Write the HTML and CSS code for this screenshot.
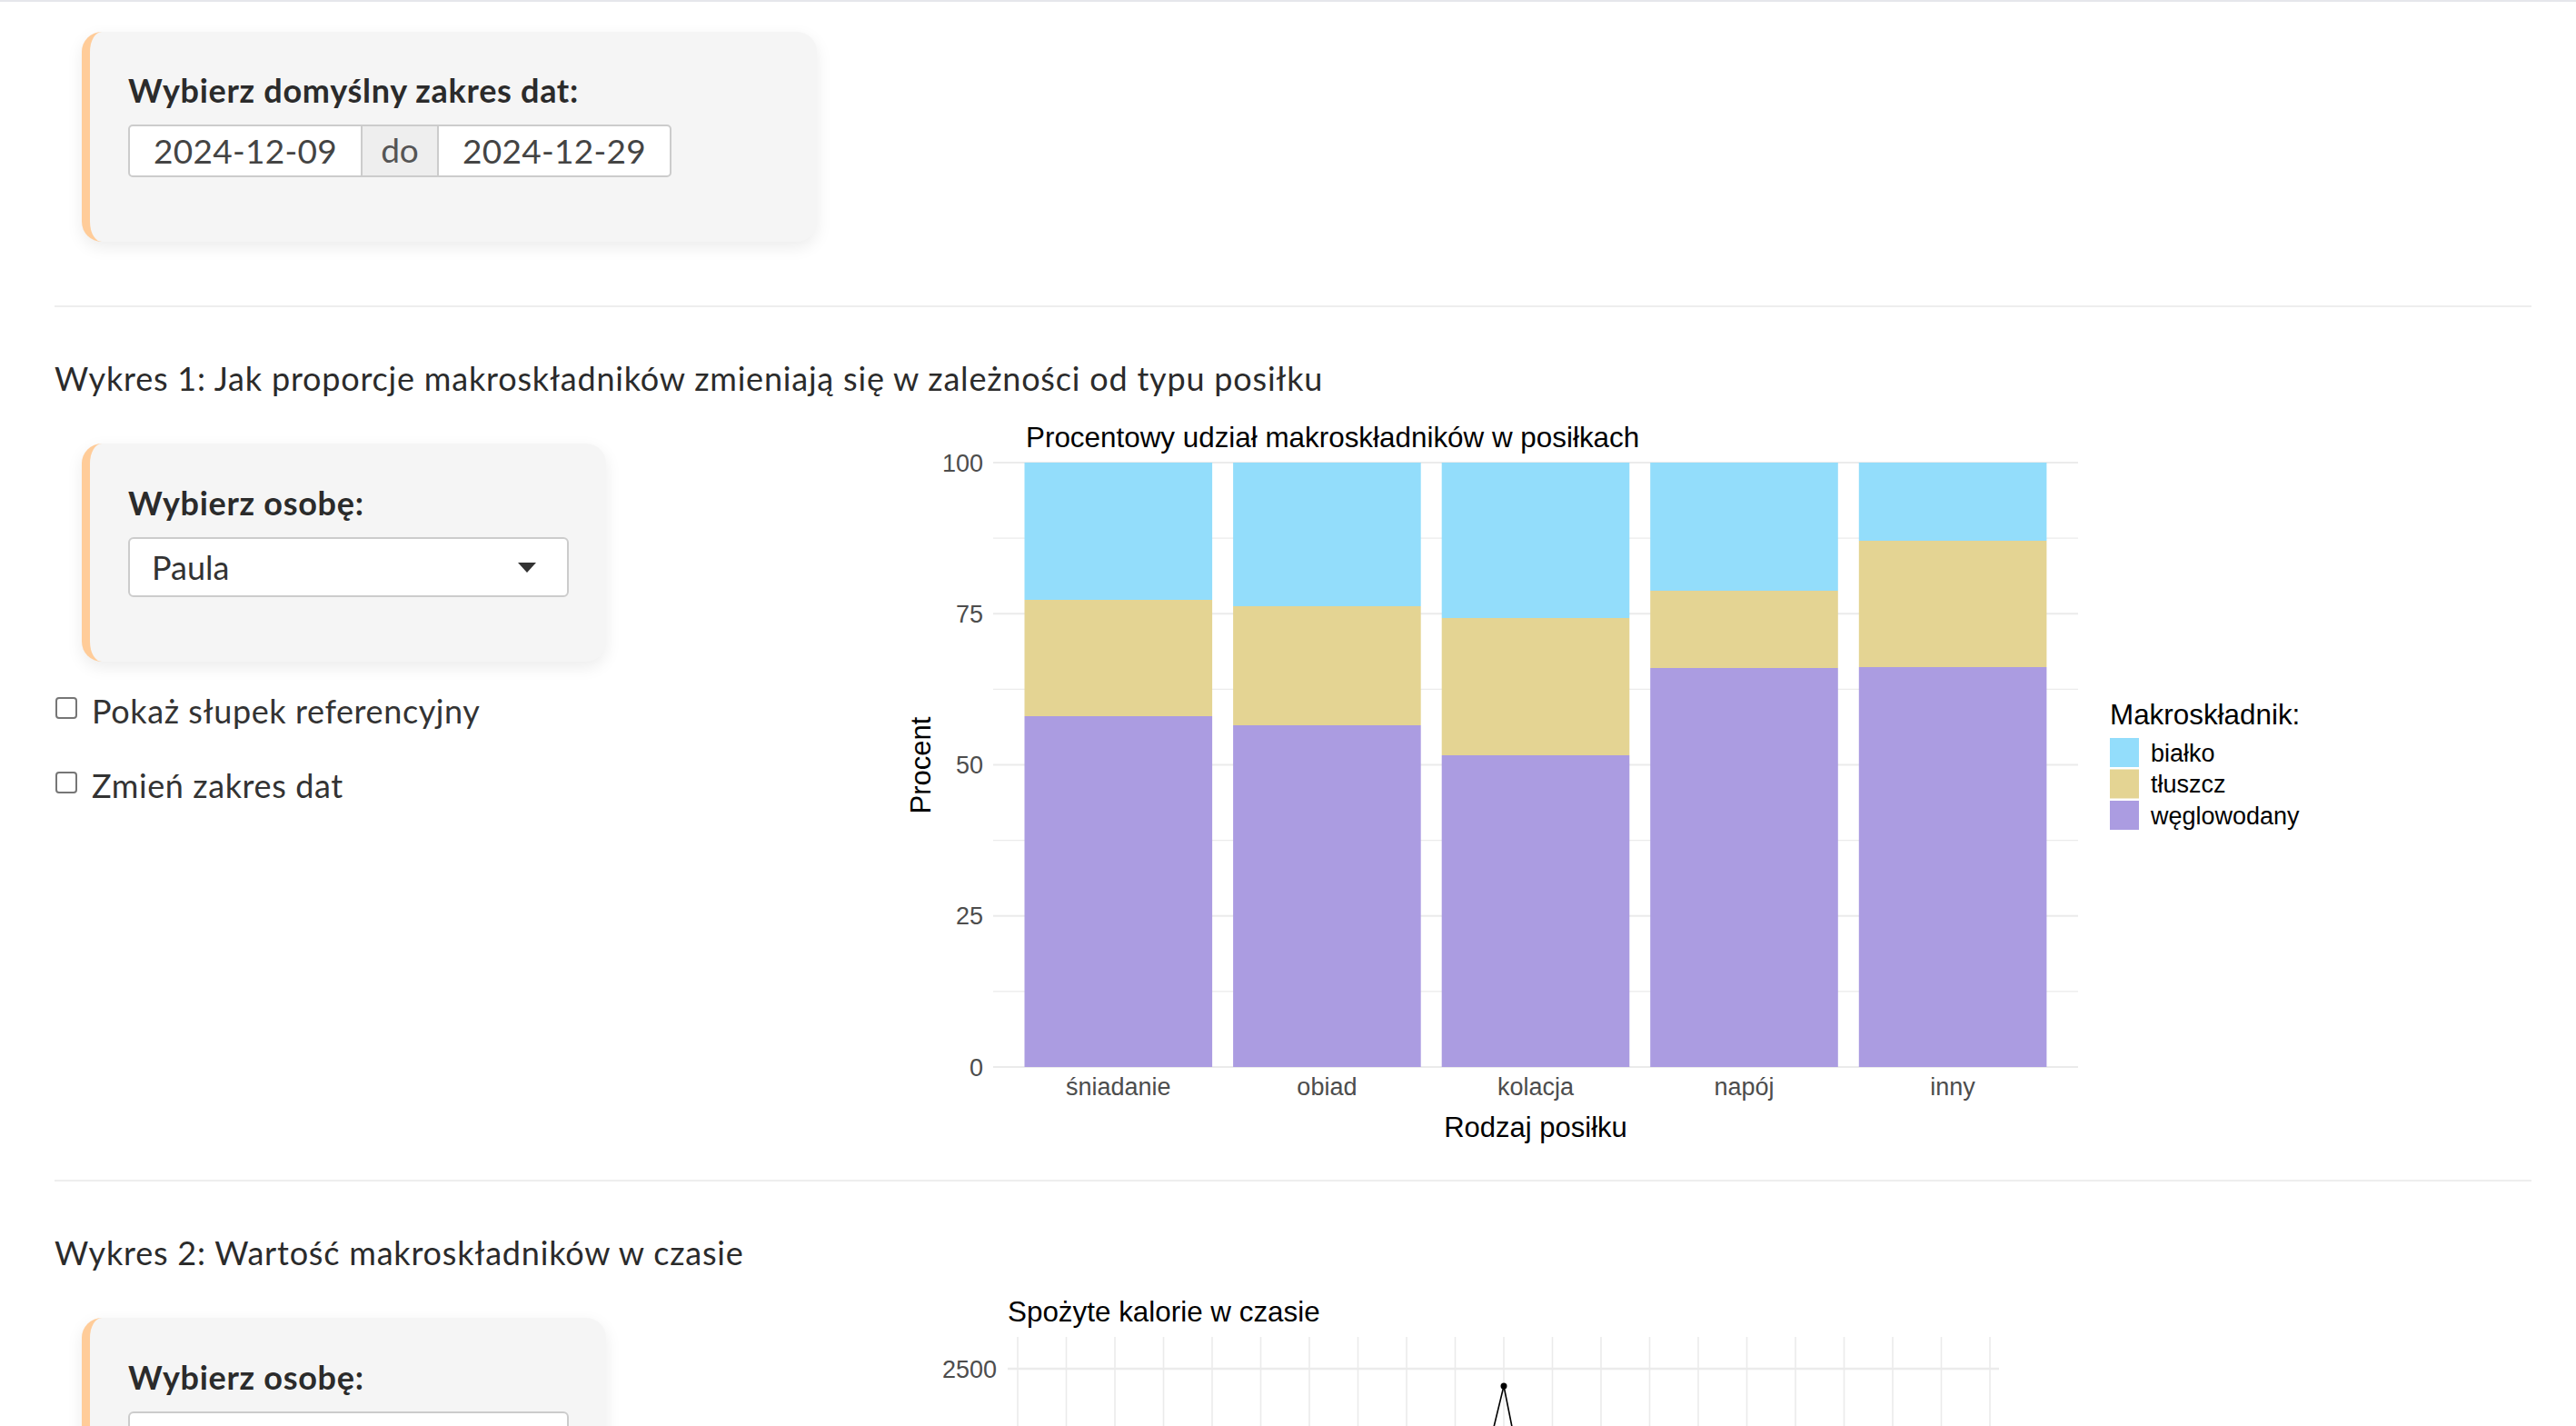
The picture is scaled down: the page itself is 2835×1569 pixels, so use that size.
FILE: index.html
```html
<!DOCTYPE html>
<html lang="pl">
<head>
<meta charset="utf-8">
<title>Makroskładniki</title>
<link rel="stylesheet" href="styles.css">
</head>
<body>
<div class="topbar"></div>
<main class="page">
  <section class="card card-wide">
    <label class="ctl-label">Wybierz domyślny zakres dat:</label>
    <div class="daterange">
      <span class="date-in">2024-12-09</span>
      <span class="addon">do</span>
      <span class="date-in">2024-12-29</span>
    </div>
  </section>

  <hr class="sep">
  <h4 class="sec-title">Wykres 1: Jak proporcje makroskładników zmieniają się w zależności od typu posiłku</h4>
  <div class="row">
    <aside class="side">
      <div class="card card-narrow">
        <label class="ctl-label">Wybierz osobę:</label>
        <div class="select"><span>Paula</span><span class="caret"></span></div>
      </div>
      <label class="check"><input type="checkbox"><span>Pokaż słupek referencyjny</span></label>
      <label class="check check-2"><input type="checkbox"><span>Zmień zakres dat</span></label>
    </aside>
    <div class="plot">
      <svg class="plot-svg" width="1780" height="822" viewBox="0 0 1780 822">
        <text class="p-title" x="179" y="46">Procentowy udział makroskładników w posiłkach</text>
        <g stroke="#EBEBEB" stroke-width="1.1">
          <line x1="143" x2="1337" y1="644.9" y2="644.9"/>
          <line x1="143" x2="1337" y1="478.6" y2="478.6"/>
          <line x1="143" x2="1337" y1="312.4" y2="312.4"/>
          <line x1="143" x2="1337" y1="146.1" y2="146.1"/>
        </g>
        <g stroke="#EBEBEB" stroke-width="2.2">
          <line x1="143" x2="1337" y1="728" y2="728"/>
          <line x1="143" x2="1337" y1="561.75" y2="561.75"/>
          <line x1="143" x2="1337" y1="395.5" y2="395.5"/>
          <line x1="143" x2="1337" y1="229.25" y2="229.25"/>
          <line x1="143" x2="1337" y1="63" y2="63"/>
        </g>
        <g>
          <rect x="177.5" y="63" width="206.6" height="151" fill="#93DDFB"/>
          <rect x="177.5" y="214" width="206.6" height="128" fill="#E4D493"/>
          <rect x="177.5" y="342" width="206.6" height="386" fill="#AB9CE1"/>

          <rect x="407.1" y="63" width="206.6" height="158" fill="#93DDFB"/>
          <rect x="407.1" y="221" width="206.6" height="131" fill="#E4D493"/>
          <rect x="407.1" y="352" width="206.6" height="376" fill="#AB9CE1"/>

          <rect x="636.7" y="63" width="206.6" height="171" fill="#93DDFB"/>
          <rect x="636.7" y="234" width="206.6" height="151" fill="#E4D493"/>
          <rect x="636.7" y="385" width="206.6" height="343" fill="#AB9CE1"/>

          <rect x="866.2" y="63" width="206.6" height="141" fill="#93DDFB"/>
          <rect x="866.2" y="204" width="206.6" height="85" fill="#E4D493"/>
          <rect x="866.2" y="289" width="206.6" height="439" fill="#AB9CE1"/>

          <rect x="1095.8" y="63" width="206.6" height="86" fill="#93DDFB"/>
          <rect x="1095.8" y="149" width="206.6" height="139" fill="#E4D493"/>
          <rect x="1095.8" y="288" width="206.6" height="440" fill="#AB9CE1"/>
        </g>
        <g class="axis-text" text-anchor="end">
          <text x="132" y="72.5">100</text>
          <text x="132" y="238.75">75</text>
          <text x="132" y="405">50</text>
          <text x="132" y="571.25">25</text>
          <text x="132" y="737.5">0</text>
        </g>
        <g class="axis-text" text-anchor="middle">
          <text x="280.8" y="759">śniadanie</text>
          <text x="510.4" y="759">obiad</text>
          <text x="740" y="759">kolacja</text>
          <text x="969.5" y="759">napój</text>
          <text x="1199.1" y="759">inny</text>
        </g>
        <text class="axis-title" x="740" y="805" text-anchor="middle">Rodzaj posiłku</text>
        <text class="axis-title" transform="translate(74,396) rotate(-90)" text-anchor="middle">Procent</text>
        <text class="p-title" x="1372" y="351">Makroskładnik:</text>
        <rect x="1372" y="366" width="32" height="32" fill="#93DDFB"/>
        <rect x="1372" y="400.5" width="32" height="32" fill="#E4D493"/>
        <rect x="1372" y="435" width="32" height="32" fill="#AB9CE1"/>
        <g class="legend-text">
          <text x="1417" y="391.5">białko</text>
          <text x="1417" y="426">tłuszcz</text>
          <text x="1417" y="460.5">węglowodany</text>
        </g>
      </svg>
    </div>
  </div>

  <hr class="sep sep-after-plot">
  <h4 class="sec-title">Wykres 2: Wartość makroskładników w czasie</h4>
  <div class="row">
    <aside class="side">
      <div class="card card-narrow">
        <label class="ctl-label">Wybierz osobę:</label>
        <div class="select"><span>Paula</span><span class="caret"></span></div>
      </div>
    </aside>
    <div class="plot">
      <svg class="plot-svg" width="1780" height="822" viewBox="0 0 1780 822">
        <text class="p-title" x="159" y="46">Spożyte kalorie w czasie</text>
        <g stroke="#EBEBEB" stroke-width="1.6">
          <line x1="170" x2="170" y1="63" y2="822"/>
          <line x1="223.5" x2="223.5" y1="63" y2="822"/>
          <line x1="277" x2="277" y1="63" y2="822"/>
          <line x1="330.5" x2="330.5" y1="63" y2="822"/>
          <line x1="384" x2="384" y1="63" y2="822"/>
          <line x1="437.5" x2="437.5" y1="63" y2="822"/>
          <line x1="491" x2="491" y1="63" y2="822"/>
          <line x1="544.5" x2="544.5" y1="63" y2="822"/>
          <line x1="598" x2="598" y1="63" y2="822"/>
          <line x1="651.5" x2="651.5" y1="63" y2="822"/>
          <line x1="705" x2="705" y1="63" y2="822"/>
          <line x1="758.5" x2="758.5" y1="63" y2="822"/>
          <line x1="812" x2="812" y1="63" y2="822"/>
          <line x1="865.5" x2="865.5" y1="63" y2="822"/>
          <line x1="919" x2="919" y1="63" y2="822"/>
          <line x1="972.5" x2="972.5" y1="63" y2="822"/>
          <line x1="1026" x2="1026" y1="63" y2="822"/>
          <line x1="1079.5" x2="1079.5" y1="63" y2="822"/>
          <line x1="1133" x2="1133" y1="63" y2="822"/>
          <line x1="1186.5" x2="1186.5" y1="63" y2="822"/>
          <line x1="1240" x2="1240" y1="63" y2="822"/>
        </g>
        <line x1="159" x2="1250" y1="98" y2="98" stroke="#EBEBEB" stroke-width="2.6"/>
        <text class="axis-text" x="147" y="107.5" text-anchor="end">2500</text>
        <polyline points="677,232 705,117 728,232" fill="none" stroke="#000" stroke-width="1.6"/>
        <circle cx="705" cy="117" r="3.5" fill="#000"/>
      </svg>
    </div>
  </div>
</main>
</body>
</html>
```

FILE: styles.css
```css
html, body {
  margin: 0;
  padding: 0;
  overflow: hidden;
  background: #ffffff;
}

body {
  font-family: Lato, "Noto Sans", sans-serif;
  font-size: 36px;
  line-height: 51px;
  color: #333333;
}

.topbar {
  height: 2px;
  background: #e5e6eb;
}

.page {
  padding: 0 49px 0 60px;
}

.card {
  box-sizing: border-box;
  margin-left: 30px;
  background: #f5f5f5;
  border-left: 9px solid #ffcc99;
  border-radius: 22px;
  box-shadow: 0 6px 18px rgba(0, 0, 0, 0.08);
  padding: 39px 41px 71px 42px;
}

.card-wide {
  width: 809px;
  margin-top: 33px;
}

.card-narrow {
  width: 577px;
  margin-top: 42px;
  padding-top: 40px;
}

.ctl-label {
  display: block;
  font-weight: 700;
  letter-spacing: 0.7px;
  margin-bottom: 12px;
  color: #2b2b2b;
}

.daterange {
  display: inline-flex;
  border: 2px solid #cccccc;
  border-radius: 5px;
  overflow: hidden;
  height: 54px;
  background: #ffffff;
}

.date-in {
  width: 254px;
  text-align: center;
  font-size: 37px;
  line-height: 54px;
  color: #444444;
  letter-spacing: 0.3px;
}

.addon {
  width: 82px;
  text-align: center;
  background: #eeeeee;
  border-left: 2px solid #cccccc;
  border-right: 2px solid #cccccc;
  font-size: 37px;
  line-height: 52px;
  color: #555555;
}

.select {
  box-sizing: border-box;
  height: 66px;
  display: flex;
  align-items: center;
  justify-content: space-between;
  border: 2px solid #cccccc;
  border-radius: 6px;
  background: #ffffff;
  padding: 0 34px 0 24px;
  font-size: 36px;
  color: #333333;
}

.caret {
  width: 0;
  height: 0;
  border-left: 10px solid transparent;
  border-right: 10px solid transparent;
  border-top: 11px solid #333333;
}

.sep {
  border: 0;
  border-top: 2px solid #eeeeee;
  margin: 70px 0 0;
  height: 0;
}

.sep-after-plot {
  margin-top: 30px;
}

.sec-title {
  font-size: 36px;
  font-weight: 400;
  letter-spacing: 0.8px;
  line-height: 51px;
  margin: 53px 0 4px;
  color: #2b2b2b;
}

.row {
  display: flex;
  align-items: flex-start;
}

.side {
  flex: none;
  width: 890px;
}

.check {
  display: flex;
  align-items: flex-start;
  margin-top: 29px;
  font-size: 36px;
  letter-spacing: 0.6px;
  color: #333333;
}

.check-2 {
  margin-top: 31px;
}

.check input {
  appearance: none;
  -webkit-appearance: none;
  box-sizing: border-box;
  width: 24px;
  height: 24px;
  margin: 10px 16px 0 1px;
  border: 2px solid #767676;
  border-radius: 4px;
  background: #ffffff;
  flex: none;
}

.plot {
  flex: none;
}

.plot-svg {
  display: block;
  font-family: "Liberation Sans", Arial, sans-serif;
}

.p-title {
  font-size: 31.4px;
  fill: #000000;
}

.axis-text {
  font-size: 27px;
  fill: #4d4d4d;
}

.axis-title {
  font-size: 31px;
  fill: #000000;
}

.legend-text {
  font-size: 27px;
  fill: #000000;
}
```
